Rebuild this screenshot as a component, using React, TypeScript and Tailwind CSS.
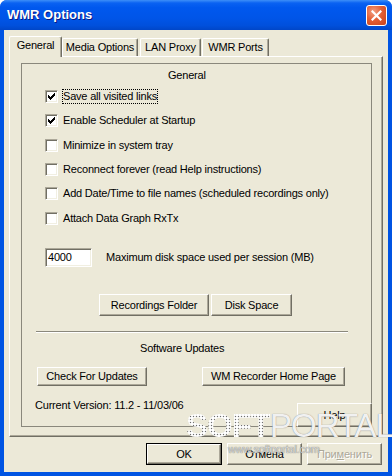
import React from "react";

// classic 3D edges on the XP beige palette
const raised =
  "border border-t-white border-l-white border-r-[#716f64] border-b-[#716f64] shadow-[inset_-1px_-1px_0_#aca899]";

function Btn({ label, className }: { label: string; className: string }) {
  return (
    <button
      className={`${raised} bg-[#ece9d8] flex items-center justify-center leading-[13px] ${className}`}
    >
      {label}
    </button>
  );
}

function Check() {
  const px: [number, number][] = [
    [6, 0],
    [5, 1], [6, 1],
    [0, 2], [4, 2], [5, 2], [6, 2],
    [0, 3], [1, 3], [3, 3], [4, 3], [5, 3],
    [0, 4], [1, 4], [2, 4], [3, 4], [4, 4],
    [1, 5], [2, 5], [3, 5],
    [2, 6],
  ];
  return (
    <svg width="9" height="9" viewBox="0 0 9 9" shapeRendering="crispEdges">
      {px.map(([x, y]) => (
        <rect key={`${x}-${y}`} x={x + 1} y={y + 1} width="1" height="1" fill="#000" />
      ))}
    </svg>
  );
}

function CheckRow({
  label,
  checked,
  focus,
  className,
}: {
  label: string;
  checked?: boolean;
  focus?: boolean;
  className: string;
}) {
  return (
    <div className={`flex items-center h-[13px] ${className}`}>
      <div className="w-[13px] h-[13px] bg-white border border-t-[#aca899] border-l-[#aca899] border-r-white border-b-white shadow-[inset_1px_1px_0_#716f64,inset_-1px_-1px_0_#f1efe2] flex items-center justify-center">
        {checked && <Check />}
      </div>
      <span
        className={`ml-[4px] border leading-[13px] ${
          focus ? "border-dotted border-black" : "border-transparent"
        }`}
      >
        {label}
      </span>
    </div>
  );
}

function Tab({ label, active, className }: { label: string; active?: boolean; className: string }) {
  return (
    <div
      className={`flex items-center justify-center bg-[#ece9d8] border-t border-l border-t-white border-l-white border-r border-r-[#716f64] rounded-t-[2px] shadow-[inset_-1px_0_0_#aca899] ${
        active ? "h-[21px] -mb-px relative z-10 pb-[3px]" : "h-[18px]"
      } ${className}`}
    >
      {label}
    </div>
  );
}

export default function App() {
  return (
    <div className="w-[392px] h-[476px] relative flex flex-col bg-[#0054e3] rounded-t-[7px] overflow-hidden font-['Liberation_Sans',Arial,sans-serif] text-[11px] tracking-[-0.2px] text-black">
      {/* Title bar */}
      <div className="h-[30px] flex items-center justify-between bg-[linear-gradient(to_bottom,#3d8ff8_0%,#0a62f2_10%,#0058ee_25%,#0055e8_60%,#0050dc_85%,#0046c8_100%)]">
        <span className="pl-[7px] text-[13px] tracking-normal font-bold text-white [text-shadow:1px_1px_0_#0a1883]">
          WMR Options
        </span>
        <div className="mr-[5px] w-[21px] h-[21px] rounded-[3px] border border-white bg-[radial-gradient(circle_at_35%_30%,#f2a083_0%,#e35f36_45%,#c9421a_100%)] flex items-center justify-center">
          <svg width="11" height="11" viewBox="0 0 11 11">
            <path d="M1.5 1.5 L9.5 9.5 M9.5 1.5 L1.5 9.5" stroke="#fff" strokeWidth="2.2" strokeLinecap="square" />
          </svg>
        </div>
      </div>

      {/* Client area */}
      <div className="flex-1 mx-[4px] mb-[4px] bg-[#ece9d8] flex flex-col">
        {/* Tabs */}
        <div className="h-[26px] pl-[5px] flex items-end">
          <Tab label="General" active className="w-[53px]" />
          <Tab label="Media Options" className="w-[76px]" />
          <Tab label="LAN Proxy" className="w-[61px] ml-[2px]" />
          <Tab label="WMR Ports" className="w-[67px] ml-[1px]" />
        </div>

        {/* Tab page */}
        <div className="ml-[5px] w-[374px] h-[381px] pl-[11px] pt-[6px] border border-t-white border-l-white border-r-[#716f64] border-b-[#716f64] shadow-[inset_-1px_-1px_0_#aca899]">
          <div className="w-[351px] h-[364px] border border-[#8a887c] relative flex flex-col">
            <div className="mt-[5px] h-[13px] leading-[13px] pl-[146px]">General</div>

            <div className="pl-[23px] flex flex-col">
              <CheckRow label="Save all visited links" checked focus className="mt-[8px]" />
              <CheckRow label="Enable Scheduler at Startup" checked className="mt-[11px]" />
              <CheckRow label="Minimize in system tray" className="mt-[12px]" />
              <CheckRow label="Reconnect forever (read Help instructions)" className="mt-[11px]" />
              <CheckRow label="Add Date/Time to file names (scheduled recordings only)" className="mt-[11px]" />
              <CheckRow label="Attach Data Graph RxTx" className="mt-[12px]" />

              <div className="mt-[23px] flex items-center h-[19px]">
                <div className="w-[47px] h-[19px] bg-white border border-t-[#aca899] border-l-[#aca899] border-r-white border-b-white shadow-[inset_1px_1px_0_#716f64,inset_-1px_-1px_0_#f1efe2] pl-[2px] leading-[17px]">
                  4000
                </div>
                <span className="ml-[14px]">Maximum disk space used per session (MB)</span>
              </div>
            </div>

            <div className="mt-[27px] pl-[77px] flex gap-[2px]">
              <Btn label="Recordings Folder" className="w-[110px] h-[22px]" />
              <Btn label="Disk Space" className="w-[81px] h-[22px]" />
            </div>

            <div className="mt-[15px] ml-[14px] w-[312px] h-[2px] border-t border-t-[#8a887c] border-b border-b-white" />

            <div className="mt-[9px] h-[13px] leading-[13px] pl-[118px]">Software Updates</div>

            <div className="mt-[12px] pl-[15px] flex gap-[55px]">
              <Btn label="Check For Updates" className="w-[110px] h-[19px]" />
              <Btn label="WM Recorder Home Page" className="w-[143px] h-[19px]" />
            </div>

            <div className="mt-[13px] pl-[13px] h-[13px] leading-[13px]">Current Version: 11.2 - 11/03/06</div>

            <Btn label="Help" className="absolute top-[339px] right-[-1px] w-[75px] h-[24px]" />
          </div>
        </div>

        {/* Dialog buttons */}
        <div className="mt-[6px] pr-[6px] flex justify-end gap-[5px]">
          <button className="w-[76px] h-[22px] border border-black bg-[#ece9d8] flex">
            <span className="flex-1 flex items-center justify-center border border-t-white border-l-white border-r-[#716f64] border-b-[#716f64] shadow-[inset_-1px_-1px_0_#aca899]">
              OK
            </span>
          </button>
          <Btn label="Отмена" className="w-[75px] h-[22px]" />
          <button className={`${raised} w-[75px] h-[22px] bg-[#ece9d8] flex items-center justify-center text-[#aca899] [text-shadow:1px_1px_0_#fff]`}>
            При<span className="underline">м</span>енить
          </button>
        </div>
      </div>

      {/* Watermark */}
      <div className="absolute left-[186px] top-[409px] flex items-end pointer-events-none tracking-[-1px]">
        <span className="text-[33px] font-bold leading-[33px] text-transparent bg-clip-text bg-[radial-gradient(#6f6f6f_40%,#ffffff_48%)] bg-[length:3px_3px]">
          SOFT
        </span>
        <span className="text-[33px] leading-[33px] text-white/90 [text-shadow:0_0_1px_#6a6a6a]">
          PORTAL
        </span>
      </div>
      <div className="absolute left-[228px] top-[443px] text-[11px] leading-[12px] text-[#d8d8d8] [text-shadow:0_0_1px_#555] pointer-events-none">
        www.softportal.com
      </div>
    </div>
  );
}
